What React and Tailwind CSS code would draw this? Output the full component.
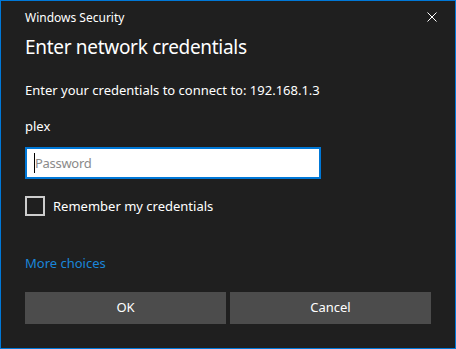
import React from 'react'

const CloseIcon = () => (
  <svg width="10" height="10" viewBox="0 0 10 10" className="text-white">
    <path d="M0.5 0.5 L9.5 9.5 M9.5 0.5 L0.5 9.5" stroke="currentColor" strokeWidth="1" fill="none" />
  </svg>
)

const App = () => {
  return (
    <div className="w-[456px] h-[349px] border border-[#0078d7] bg-[#1f1f1f] text-white overflow-hidden font-['Noto_Sans','Open_Sans',sans-serif]">
      <div className="relative pl-[24px] pr-[24px]">
        <div className="absolute right-[18px] top-[11px]">
          <CloseIcon />
        </div>
        <div className="pt-[9px] text-[12px] leading-[16px]">Windows Security</div>
        <h1 className="mt-[7px] text-[19px] leading-[28px] tracking-[-0.3px]">Enter network credentials</h1>
        <p className="mt-[19px] text-[13px] leading-[20px]">Enter your credentials to connect to: 192.168.1.3</p>
        <p className="mt-[16px] text-[13px] leading-[20px]">plex</p>
        <div className="mt-[11px] w-[296px] h-[32px] border-2 border-[#0078d7] bg-white flex items-center pl-[7px]">
          <span className="w-px h-[20px] bg-black"></span>
          <span className="text-[13px] leading-[20px] text-[#8a8a8a] tracking-[-0.3px]">Password</span>
        </div>
        <label className="mt-[17px] flex items-center gap-[8px]">
          <span className="w-[20px] h-[20px] border-2 border-[#cccccc]"></span>
          <span className="text-[13px] leading-[20px]">Remember my credentials</span>
        </label>
        <a href="#" className="block mt-[37px] text-[13px] leading-[20px] text-[#1a86d9] w-fit">More choices</a>
        <div className="mt-[19px] grid grid-cols-2 gap-[4px]">
          <button className="h-[32px] bg-[#4c4c4c] text-[13px] text-white">OK</button>
          <button className="h-[32px] bg-[#4c4c4c] text-[13px] text-white">Cancel</button>
        </div>
      </div>
    </div>
  )
}

export default App
